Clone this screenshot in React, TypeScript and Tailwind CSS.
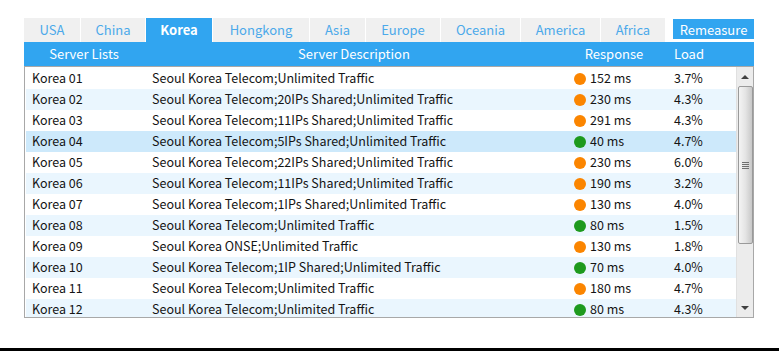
import React from 'react';

const TABS: { name: string; w: string }[] = [
  { name: 'USA', w: 'w-[57px]' },
  { name: 'China', w: 'w-[65px]' },
  { name: 'Korea', w: 'w-[67px]' },
  { name: 'Hongkong', w: 'w-[97px]' },
  { name: 'Asia', w: 'w-[56px]' },
  { name: 'Europe', w: 'w-[75px]' },
  { name: 'Oceania', w: 'w-[80px]' },
  { name: 'America', w: 'w-[80px]' },
  { name: 'Africa', w: 'w-[65px]' },
];

type Server = { name: string; desc: string; ms: number; load: string };

const SERVERS: Server[] = [
  { name: 'Korea 01', desc: 'Seoul Korea Telecom;Unlimited Traffic', ms: 152, load: '3.7%' },
  { name: 'Korea 02', desc: 'Seoul Korea Telecom;20IPs Shared;Unlimited Traffic', ms: 230, load: '4.3%' },
  { name: 'Korea 03', desc: 'Seoul Korea Telecom;11IPs Shared;Unlimited Traffic', ms: 291, load: '4.3%' },
  { name: 'Korea 04', desc: 'Seoul Korea Telecom;5IPs Shared;Unlimited Traffic', ms: 40, load: '4.7%' },
  { name: 'Korea 05', desc: 'Seoul Korea Telecom;22IPs Shared;Unlimited Traffic', ms: 230, load: '6.0%' },
  { name: 'Korea 06', desc: 'Seoul Korea Telecom;11IPs Shared;Unlimited Traffic', ms: 190, load: '3.2%' },
  { name: 'Korea 07', desc: 'Seoul Korea Telecom;1IPs Shared;Unlimited Traffic', ms: 130, load: '4.0%' },
  { name: 'Korea 08', desc: 'Seoul Korea Telecom;Unlimited Traffic', ms: 80, load: '1.5%' },
  { name: 'Korea 09', desc: 'Seoul Korea ONSE;Unlimited Traffic', ms: 130, load: '1.8%' },
  { name: 'Korea 10', desc: 'Seoul Korea Telecom;1IP Shared;Unlimited Traffic', ms: 70, load: '4.0%' },
  { name: 'Korea 11', desc: 'Seoul Korea Telecom;Unlimited Traffic', ms: 180, load: '4.7%' },
  { name: 'Korea 12', desc: 'Seoul Korea Telecom;Unlimited Traffic', ms: 80, load: '4.3%' },
];

const FONT = "font-['Noto_Sans_CJK_SC','Microsoft_YaHei',sans-serif]";

export default function App() {
  return (
    <div className={`w-[779px] h-[351px] bg-white flex flex-col ${FONT} text-[12.5px]`}>
      <div className="pt-[18px] pl-[24px] w-[754px] flex flex-col">
        {/* Region tabs + remeasure */}
        <div className="flex items-start h-[24px] text-[13px]">
          {TABS.map((t) => (
            <div
              key={t.name}
              className={`${t.w} h-[24px] flex items-center justify-center border-r border-white ${
                t.name === 'Korea'
                  ? 'bg-[#31a5f0] text-white font-bold'
                  : 'bg-[#f0f0f0] text-[#4ba9ea]'
              }`}
            >
              {t.name}
            </div>
          ))}
          <div className="flex-1" />
          <button className="w-[81px] h-[20px] mt-[1px] bg-[#31a5f0] text-white flex items-center justify-center leading-none">
            Remeasure
          </button>
        </div>

        {/* Column header */}
        <div className="h-[24px] bg-[#31a5f0] text-white flex items-center text-[13px]">
          <div className="w-[120px] text-center">Server Lists</div>
          <div className="w-[420px] text-center">Server Description</div>
          <div className="w-[100px] text-center">Response</div>
          <div className="w-[50px] text-center">Load</div>
        </div>

        {/* Server table */}
        <div className="h-[252px] border border-[#a8a8a8] flex overflow-hidden">
          <div className="flex-1 pt-px pl-px overflow-hidden">
            {SERVERS.map((s, i) => (
              <div
                key={s.name}
                className={`h-[21px] flex items-center text-[#141414] ${
                  i === 3 ? 'bg-[#cde9fb]' : i % 2 === 1 ? 'bg-[#eaf6fe]' : 'bg-white'
                }`}
              >
                <div className="w-[118px] pl-[6px]">{s.name}</div>
                <div className="w-[422px] pl-[8px] whitespace-nowrap">{s.desc}</div>
                <div className="w-[98px] pl-[8px] flex items-center gap-[4px]">
                  <span
                    className={`w-[12px] h-[12px] rounded-full ${
                      s.ms < 100 ? 'bg-[#1e9a1e]' : 'bg-[#fb8500]'
                    }`}
                  />
                  <span>{s.ms} ms</span>
                </div>
                <div className="pl-[10px]">{s.load}</div>
              </div>
            ))}
          </div>

          {/* Scrollbar */}
          <div className="w-[17px] bg-[#ececec] border-l border-[#e0e0e0] flex flex-col items-center">
            <div className="h-[19px] w-full flex items-center justify-center">
              <div className="w-0 h-0 border-l-[4px] border-r-[4px] border-b-[4px] border-l-transparent border-r-transparent border-b-[#404040]" />
            </div>
            <div className="h-[158px] w-[15px] rounded-[2px] border border-[#9a9a9a] bg-gradient-to-r from-[#f4f4f4] via-[#e4e4e4] to-[#c8c8c8] flex flex-col items-center justify-center gap-[1px]">
              <div className="w-[7px] h-[1px] bg-[#707070]" />
              <div className="w-[7px] h-[1px] bg-[#707070]" />
              <div className="w-[7px] h-[1px] bg-[#707070]" />
              <div className="w-[7px] h-[1px] bg-[#707070]" />
            </div>
            <div className="flex-1" />
            <div className="h-[19px] w-full flex items-center justify-center">
              <div className="w-0 h-0 border-l-[4px] border-r-[4px] border-t-[4px] border-l-transparent border-r-transparent border-t-[#404040]" />
            </div>
          </div>
        </div>
      </div>
      <div className="flex-1" />
      <div className="h-[3px] bg-black" />
    </div>
  );
}
